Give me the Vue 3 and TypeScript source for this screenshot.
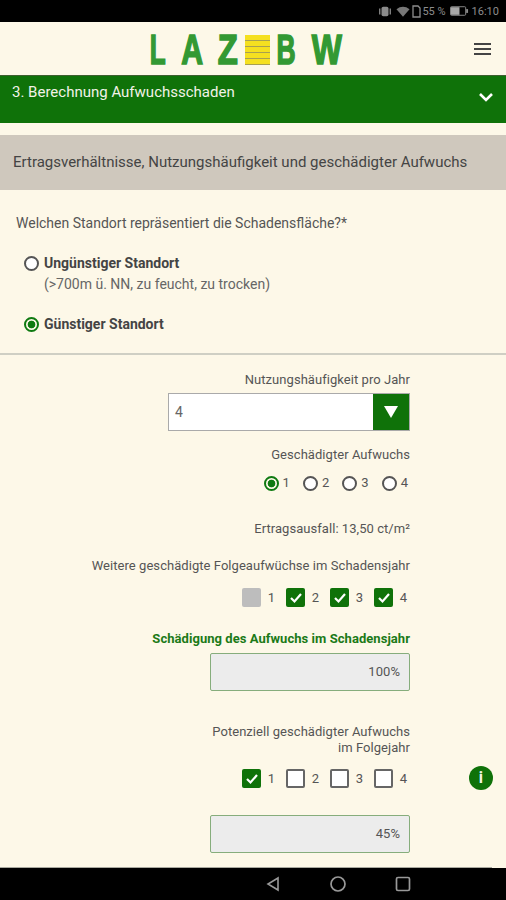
<script setup lang="ts">
const folge = [
  { n: 1, state: 'off' },
  { n: 2, state: 'on' },
  { n: 3, state: 'on' },
  { n: 4, state: 'on' },
]
const potenziell = [
  { n: 1, state: 'on' },
  { n: 2, state: 'empty' },
  { n: 3, state: 'empty' },
  { n: 4, state: 'empty' },
]
</script>

<template>
  <div class="phone">
    <div class="status">
      <svg class="st-icon" width="14" height="13" viewBox="0 0 16 13"><rect x="4" y="1" width="8" height="11" rx="2" fill="#8c8c8c" /><path d="M2 3v7M14 3v7" stroke="#8c8c8c" stroke-width="1.5" /></svg>
      <svg class="st-icon wifi" width="14" height="13" viewBox="0 0 15 13"><path d="M0.5 4 7.5 12 14.500 4C10 0.500 5 0.500 0.500 4Z" fill="#777" /></svg>
      <svg class="st-icon" width="9" height="13" viewBox="0 0 9 13"><path d="M1 1h5l2 2v9H1Z" fill="none" stroke="#8c8c8c" stroke-width="1.300" /></svg>
      <span>55 %</span>
      <svg class="st-icon batt" width="19" height="10" viewBox="0 0 20 10"><rect x="0.500" y="0.500" width="16" height="9" rx="1" fill="none" stroke="#8c8c8c" /><rect x="1" y="1" width="9" height="8" fill="#a8a8a8" /><rect x="17" y="3" width="2" height="4" fill="#8c8c8c" /></svg>
      <span class="clock">16:10</span>
    </div>

    <header class="top">
      <div class="logo">
        <span class="ch l"><em>L</em></span>
        <span class="ch a"><em>A</em></span>
        <span class="ch z"><em>Z</em></span>
        <span class="stripes"><i></i><i></i><i></i><i></i><i></i></span>
        <span class="ch b"><em>B</em></span>
        <span class="ch w"><em>W</em></span>
      </div>
      <button class="burger" aria-label="Menü"><i></i><i></i><i></i></button>
    </header>

    <main class="content">
      <div class="section-head">
        <span>3. Berechnung Aufwuchsschaden</span>
        <svg width="16" height="10" viewBox="0 0 16 10"><path d="M2 2l6 6 6-6" fill="none" stroke="#fff" stroke-width="2.600" /></svg>
      </div>

      <div class="sub-head">Ertragsverhältnisse, Nutzungshäufigkeit und geschädigter Aufwuchs</div>

      <section class="site">
        <p class="question">Welchen Standort repräsentiert die Schadensfläche?*</p>
        <div class="site-option">
          <span class="radio"></span>
          <div>
            <b>Ungünstiger Standort</b>
            <div class="hint">(&gt;700m ü. NN, zu feucht, zu trocken)</div>
          </div>
        </div>
        <div class="site-option second">
          <span class="radio checked"></span>
          <b>Günstiger Standort</b>
        </div>
      </section>

      <section class="form">
        <label class="lbl first">Nutzungshäufigkeit pro Jahr</label>
        <div class="select">
          <span>4</span>
          <span class="arrow"><svg width="16" height="14" viewBox="0 0 16 14"><path d="M1 1h14L8 13Z" fill="#fff" /></svg></span>
        </div>

        <label class="lbl aufwuchs">Geschädigter Aufwuchs</label>
        <div class="radios">
          <span v-for="n in 4" :key="n" class="radio-item">
            <span class="radio" :class="{ checked: n === 1 }"></span>{{ n }}
          </span>
        </div>

        <div class="lbl ausfall">Ertragsausfall: 13,50 ct/m²</div>

        <label class="lbl weitere">Weitere geschädigte Folgeaufwüchse im Schadensjahr</label>
        <div class="checks">
          <span v-for="c in folge" :key="c.n" class="check-item">
            <span class="box" :class="c.state">
              <svg v-if="c.state === 'on'" width="14" height="12" viewBox="0 0 14 12"><path d="M2 6l3.500 3.500L12 2" fill="none" stroke="#fff" stroke-width="2.200" /></svg>
            </span>
            <span class="num">{{ c.n }}</span>
          </span>
        </div>

        <label class="lbl green">Schädigung des Aufwuchs im Schadensjahr</label>
        <div class="readonly">100%</div>

        <label class="lbl potenz">Potenziell geschädigter Aufwuchs<br />im Folgejahr</label>
        <div class="checks second-row">
          <span v-for="c in potenziell" :key="c.n" class="check-item">
            <span class="box" :class="c.state">
              <svg v-if="c.state === 'on'" width="14" height="12" viewBox="0 0 14 12"><path d="M2 6l3.500 3.500L12 2" fill="none" stroke="#fff" stroke-width="2.200" /></svg>
            </span>
            <span class="num">{{ c.n }}</span>
          </span>
          <span class="info">i</span>
        </div>
        <div class="readonly last">45%</div>
      </section>
    </main>

    <nav class="navbar">
      <svg width="16" height="16" viewBox="0 0 16 16"><path d="M13 2 3 8l10 6Z" fill="none" stroke="#999" stroke-width="1.600" /></svg>
      <svg width="18" height="18" viewBox="0 0 18 18"><circle cx="9" cy="9" r="7" fill="none" stroke="#999" stroke-width="1.700" /></svg>
      <svg width="16" height="16" viewBox="0 0 16 16"><rect x="1.500" y="1.500" width="13" height="13" rx="1.500" fill="none" stroke="#999" stroke-width="1.700" /></svg>
    </nav>
  </div>
</template>

<style scoped>
.phone {
  width: 506px;
  height: 900px;
  display: flex;
  flex-direction: column;
  overflow: hidden;
  background: #fdf8e8;
  font-family: Roboto, "Liberation Sans", sans-serif;
  font-size: 13px;
  color: #555;
}

.status {
  height: 22px;
  flex: none;
  background: #000;
  color: #8c8c8c;
  display: flex;
  align-items: center;
  justify-content: flex-end;
  padding-right: 7px;
  font-size: 11px;
  gap: 1px;
}
.st-icon { display: block; }
.wifi { margin: 0 1px 0 3px; }
.batt { margin-left: 3px; }
.clock { margin-left: 2px; }

.top {
  height: 53px;
  flex: none;
  background: #fdf8e8;
  display: flex;
  align-items: center;
  justify-content: center;
  position: relative;
}
.logo {
  display: flex;
  align-items: center;
  height: 30px;
  margin-left: -14px;
  margin-top: 3px;
}
.ch {
  font-family: "Liberation Sans", Arial, sans-serif;
  font-weight: 700;
  font-size: 42px;
  line-height: 30px;
  color: #339933;
  display: inline-flex;
  justify-content: center;
  -webkit-text-stroke: 1.6px #339933;
}
.ch em { font-style: normal; display: block; }
.ch.l { width: 16px; margin-right: 15px; }
.ch.l em { transform: scaleX(0.62); }
.ch.a { width: 22px; margin-right: 15px; }
.ch.a em { transform: scaleX(0.72); }
.ch.z { width: 20px; margin-right: 7px; }
.ch.z em { transform: scaleX(0.78); }
.ch.b { width: 19px; margin: 0 16px 0 7px; }
.ch.b em { transform: scaleX(0.63); }
.ch.w { width: 30px; }
.ch.w em { transform: scaleX(0.76); }
.stripes {
  width: 25px;
  height: 30px;
  display: flex;
  flex-direction: column;
  justify-content: space-between;
}
.stripes i {
  display: block;
  height: 5px;
  background: #f5e020;
  border-bottom: 1px solid #a8a050;
}
.burger {
  position: absolute;
  right: 15px;
  top: 21px;
  width: 17px;
  padding: 0;
  border: 0;
  background: none;
  display: flex;
  flex-direction: column;
  gap: 3px;
}
.burger i {
  display: block;
  height: 2px;
  background: #444;
}

.content {
  flex: 1;
  min-height: 0;
  overflow: hidden;
  position: relative;
}
.content::after {
  content: "";
  position: absolute;
  left: 0;
  right: 14px;
  bottom: 0;
  height: 1px;
  background: #a9a99f;
}

.section-head {
  height: 48px;
  box-sizing: border-box;
  background: #0f7209;
  color: #f2f2e8;
  font-size: 15px;
  padding: 7px 12px 0;
  display: flex;
  justify-content: space-between;
  border-top: 1px solid #3f5f30;
}
.section-head svg { margin: 9px 0 0 0; }

.sub-head {
  margin-top: 12px;
  height: 55px;
  background: #cfc8bd;
  color: #444;
  font-size: 15px;
  line-height: 55px;
  padding-left: 13px;
}

.site {
  height: 165px;
  box-sizing: border-box;
  border-bottom: 2px solid #cfcfc4;
  padding: 24px 24px 0;
}
.question {
  margin: 0 0 21px -8px;
  font-size: 14px;
  line-height: 18px;
}
.site-option {
  display: flex;
  gap: 5px;
  color: #444;
  font-size: 14px;
  line-height: 20px;
}
.site-option .radio { margin-top: 3px; }
.site-option.second { margin-top: 20px; }
.hint { color: #666; margin-top: 1px; }

.radio {
  width: 15px;
  height: 15px;
  box-sizing: border-box;
  flex: none;
  border: 2px solid #555;
  border-radius: 50%;
  background: #fff;
  display: inline-block;
}
.radio.checked {
  border-color: #0f7a12;
  background: radial-gradient(circle, #0f7a12 0 3.500px, #fdf8e8 4.200px);
}

.form {
  width: 410px;
  display: flex;
  flex-direction: column;
  align-items: flex-end;
  text-align: right;
  letter-spacing: 0.05px;
}
.lbl { display: block; line-height: 16px; }
.lbl.first { margin-top: 17px; }
.select {
  margin-top: 5px;
  width: 242px;
  height: 38px;
  box-sizing: border-box;
  border: 1px solid #aaa;
  background: #fff;
  display: flex;
  justify-content: space-between;
  align-items: center;
  padding-left: 6px;
  font-size: 14px;
  color: #666;
}
.arrow {
  width: 36px;
  height: 36px;
  background: #0f7209;
  display: flex;
  align-items: center;
  justify-content: center;
}
.aufwuchs { margin-top: 16px; }
.radios {
  margin-top: 12px;
  margin-right: 2px;
  display: flex;
  gap: 13px;
}
.radio-item {
  display: inline-flex;
  align-items: center;
  gap: 4px;
  line-height: 16px;
}
.ausfall { margin-top: 30px; }
.weitere { margin-top: 21px; }
.checks {
  margin-top: 14px;
  margin-right: 3px;
  display: flex;
  gap: 11px;
  position: relative;
}
.check-item {
  display: inline-flex;
  align-items: center;
  gap: 5px;
}
.num { width: 9px; line-height: 18px; }
.box {
  width: 19px;
  height: 19px;
  box-sizing: border-box;
  border-radius: 2px;
  display: flex;
  align-items: center;
  justify-content: center;
}
.box.off { background: #bdbdbd; }
.box.on { background: #0f7209; }
.box.empty { background: #fff; border: 2px solid #666; }
.green {
  margin-top: 24px;
  color: #1b7a17;
  font-weight: 700;
  font-size: 13px;
}
.readonly {
  margin-top: 6px;
  width: 200px;
  height: 38px;
  box-sizing: border-box;
  background: #ececec;
  border: 1px solid #86ad7c;
  border-radius: 2px;
  line-height: 36px;
  padding-right: 9px;
  font-size: 13px;
  color: #555;
}
.potenz { margin-top: 33px; }
.checks.second-row { margin-top: 13px; }
.info {
  position: absolute;
  left: 227px;
  top: -3px;
  width: 24px;
  height: 24px;
  border-radius: 50%;
  background: #0f7209;
  color: #f4f4e8;
  font-weight: 700;
  font-size: 16px;
  line-height: 24px;
  text-align: center;
}
.readonly.last { margin-top: 27px; }

.navbar {
  height: 32px;
  flex: none;
  background: #000;
  display: flex;
  align-items: center;
  justify-content: center;
  gap: 48px;
  padding-left: 170px;
  padding-right: 0;
  box-sizing: border-box;
}
</style>

<style>
html, body { margin: 0; background: #000; }
</style>
